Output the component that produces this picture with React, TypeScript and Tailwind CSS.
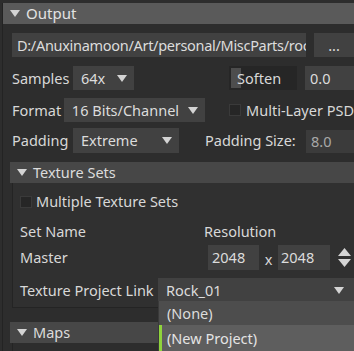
import React from 'react';

const font = { fontFamily: '"Noto Sans", "Open Sans", sans-serif' };

function Tri({ className = '' }: { className?: string }) {
  return (
    <svg width="10" height="7" viewBox="0 0 10 7" className={className}>
      <path d="M0 0 H10 L5 7 Z" fill="#d4d4d4" />
    </svg>
  );
}

function Select({ value, className = '' }: { value: string; className?: string }) {
  return (
    <div className={`flex items-center justify-between bg-[#414141] pl-[8px] pr-[7px] text-[#dcdcdc] ${className}`}>
      <span>{value}</span>
      <Tri />
    </div>
  );
}

function Checkbox() {
  return <div className="w-[12px] h-[12px] bg-[#262626] border border-[#3a3a3a]" />;
}

function SectionHeader({ title, className = '' }: { title: string; className?: string }) {
  return (
    <div className={`flex items-center h-[21px] bg-[#474747] pl-[7px] gap-[6px] text-[#dcdcdc] ${className}`}>
      <Tri />
      <span>{title}</span>
    </div>
  );
}

export default function App() {
  return (
    <div className="relative w-[354px] h-[351px] overflow-hidden bg-[#2d2d2d] text-[14.5px] leading-none text-[#d8d8d8]" style={font}>
      <div className="ml-[2px] h-full border-l border-[#232323]">
        <div className="mt-[3px] flex items-center h-[21px] bg-[#5a5a5a] pl-[7px] gap-[6px] text-[15px] text-[#e2e2e2]">
          <Tri />
          <span>Output</span>
        </div>

        <div className="pl-[9px]">
          <div className="mt-[9px] flex h-[24px] gap-[8px]">
            <div className="w-[301px] bg-[#414141] flex items-center pl-[5px] overflow-hidden whitespace-nowrap tracking-[-0.3px] text-[#dcdcdc]">
              D:/Anuxinamoon/Art/personal/MiscParts/roc
            </div>
            <div className="w-[40px] shrink-0 bg-[#414141] flex items-center justify-center text-[#dcdcdc]">...</div>
          </div>

          <div className="mt-[9px] flex h-[24px] items-center">
            <span className="w-[61px]">Samples</span>
            <Select value="64x" className="w-[61px] h-full" />
            <div className="ml-[95px] w-[68px] h-full bg-[#262626] flex items-center relative">
              <div className="absolute left-[2px] top-[2px] w-[10px] h-[20px] bg-[#4d4d4d]" />
              <span className="relative ml-[8px]">Soften</span>
            </div>
            <div className="ml-[8px] flex-1 h-full bg-[#414141] flex items-center pl-[5px] text-[#dcdcdc]">0.0</div>
          </div>

          <div className="mt-[8px] flex h-[24px] items-center">
            <span className="w-[53px] whitespace-nowrap">Format</span>
            <Select value="16 Bits/Channel" className="w-[144px] h-full" />
            <div className="ml-[24px]"><Checkbox /></div>
            <span className="ml-[5px] whitespace-nowrap">Multi-Layer PSD</span>
          </div>

          <div className="mt-[6px] flex h-[25px] items-center">
            <span className="w-[61px]">Padding</span>
            <Select value="Extreme" className="w-[106px] h-full" />
            <span className="ml-[26px] w-[101px] whitespace-nowrap">Padding Size:</span>
            <div className="flex-1 h-[23px] self-end bg-[#3b3b3b] flex items-center pl-[5px] text-[#a8a8a8]">8.0</div>
          </div>
        </div>

        <div className="pl-[7px]">
          <SectionHeader title="Texture Sets" className="mt-[9px]" />
          <div className="ml-[2px] h-[125px] bg-[#303030] border-l border-b border-[#242424] pl-[7px] flex flex-col">
            <div className="mt-[12px] flex items-center h-[13px]">
              <Checkbox />
              <span className="ml-[4px]">Multiple Texture Sets</span>
            </div>
            <div className="mt-[16px] flex items-center h-[14px]">
              <span className="w-[184px]">Set Name</span>
              <span>Resolution</span>
            </div>
            <div className="mt-[7px] flex items-center h-[25px]">
              <span className="w-[188px]">Master</span>
              <div className="w-[51px] h-full bg-[#414141] flex items-center pl-[4px] text-[#dcdcdc]">2048</div>
              <span className="w-[19px] text-center pt-[4px]">x</span>
              <div className="w-[52px] h-full bg-[#414141] flex items-center pl-[3px] text-[#dcdcdc]">2048</div>
              <div className="ml-[8px] flex flex-col gap-[3px]">
                <svg width="13" height="8" viewBox="0 0 13 8"><path d="M0 8 L6.5 0 L13 8 Z" fill="#d4d4d4" /></svg>
                <svg width="13" height="8" viewBox="0 0 13 8"><path d="M0 0 H13 L6.5 8 Z" fill="#d4d4d4" /></svg>
              </div>
            </div>
            <div className="mt-[8px] flex items-center h-[25px]">
              <span className="w-[138px] whitespace-nowrap">Texture Project Link</span>
              <Select value="Rock_01" className="flex-1 h-full pr-[10px]" />
            </div>
          </div>
          <SectionHeader title="Maps" className="mt-[14px]" />
          <div className="ml-[2px] h-[20px] border-l border-[#242424]" />
        </div>
      </div>

      <div className="absolute left-[158px] top-[301px] w-[196px] h-[50px] bg-[#4d4d4d] border-l border-[#3a3a3a] flex flex-col">
        <div className="h-[24px] flex items-center pl-[8px] text-[#dcdcdc]">(None)</div>
        <div className="flex-1 bg-[#5e5e5e] border-l-[3px] border-[#8fd43c] flex items-center pl-[5px] text-[#e4e4e4]">(New Project)</div>
      </div>
    </div>
  );
}
